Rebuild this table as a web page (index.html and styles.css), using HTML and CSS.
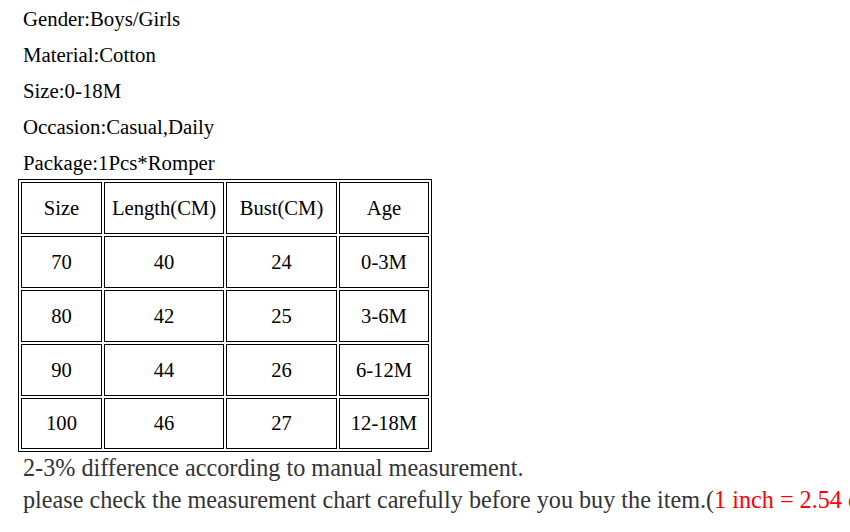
FILE: index.html
```html
<!DOCTYPE html>
<html lang="en">
<head>
<meta charset="utf-8">
<title>Romper size chart</title>
<link rel="stylesheet" href="styles.css">
</head>
<body>
<div class="page">
  <div class="specs">
    <p class="spec">Gender:Boys/Girls</p>
    <p class="spec">Material:Cotton</p>
    <p class="spec">Size:0-18M</p>
    <p class="spec">Occasion:Casual,Daily</p>
    <p class="spec">Package:1Pcs*Romper</p>
  </div>
  <table class="chart">
    <tr>
      <td class="c1">Size</td>
      <td class="c2">Length(CM)</td>
      <td class="c3">Bust(CM)</td>
      <td class="c4">Age</td>
    </tr>
    <tr><td>70</td><td>40</td><td>24</td><td>0-3M</td></tr>
    <tr><td>80</td><td>42</td><td>25</td><td>3-6M</td></tr>
    <tr><td>90</td><td>44</td><td>26</td><td>6-12M</td></tr>
    <tr class="last"><td>100</td><td>46</td><td>27</td><td>12-18M</td></tr>
  </table>
  <div class="notes">
    <p class="note">2-3% difference according to manual measurement.</p>
    <p class="note">please check the measurement chart carefully before you buy the item.(<span class="red">1 inch = 2.54 cm</span>)</p>
  </div>
</div>
</body>
</html>
```

FILE: styles.css
```css
html, body {
  margin: 0;
  padding: 0;
  background: #ffffff;
  overflow: hidden;
}

.page {
  padding: 3px 0 0 18px;
  font-family: "Liberation Serif", "Times New Roman", serif;
  color: #000;
}

.specs {
  padding-left: 5px;
}

.spec {
  margin: 0 0 4px 0;
  font-size: 20.8px;
  line-height: 32px;
  height: 32px;
  white-space: nowrap;
}

.chart {
  border-collapse: separate;
  border-spacing: 2px;
  border: 1px solid #000;
  font-size: 20.6px;
  margin-top: -4px;
}

.chart td {
  border: 1px solid #000;
  padding: 0;
  height: 50px;
  text-align: center;
  vertical-align: middle;
  line-height: normal;
  white-space: nowrap;
}

.chart .last td {
  height: 49px;
}

.chart .c1 { width: 79px; }
.chart .c2 { width: 118px; }
.chart .c3 { width: 109px; }
.chart .c4 { width: 88px; }

.notes {
  padding-left: 5px;
}

.note {
  margin: 0;
  font-size: 24.2px;
  line-height: 32px;
  color: #333333;
  white-space: nowrap;
}

.red {
  color: #ff0000;
}
```
